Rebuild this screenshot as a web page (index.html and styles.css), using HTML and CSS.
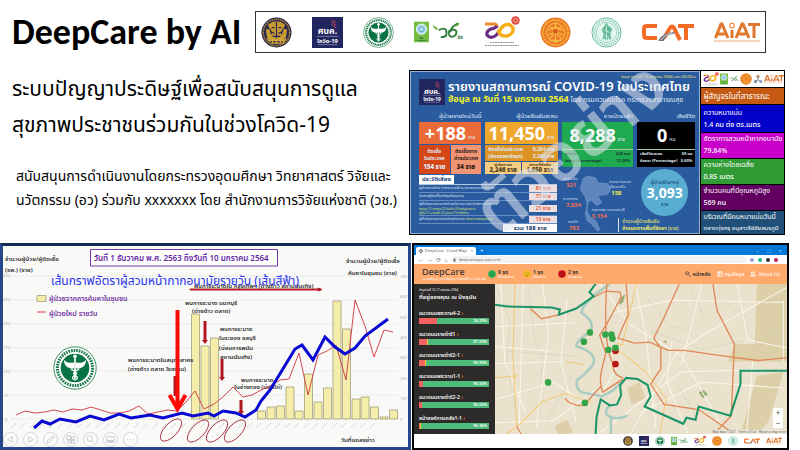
FILE: index.html
```html
<!DOCTYPE html>
<html lang="th">
<head>
<meta charset="utf-8">
<meta name="viewport" content="width=device-width, initial-scale=1">
<title>DeepCare by AI</title>
<link rel="stylesheet" href="styles.css">
</head>
<body>
<svg class="symbols" aria-hidden="true">
  <symbol id="gov" viewBox="0 0 32 32">
    <circle cx="16" cy="16" r="15.5" fill="#2a2750"/>
    <circle cx="16" cy="16" r="13.6" fill="none" stroke="#b8902c" stroke-width="1.4" stroke-dasharray="1.4 .7"/>
    <path d="M7 8q9-7 18 0l-2 4 4 1-1 7-3 4H9l-3-4-1-7 4-1z" fill="#c59a2f"/>
    <path d="M11 11h3m4 0h3M10 15l4 2m8-2l-4 2M16 5v18M12 20h8M9 12l2 6m12-6l-2 6" stroke="#2a2750" stroke-width="1.2" fill="none"/>
    <path d="M6 23l3-2v5m3-4v5m4-5v6m4-6v5m3-6v5l3-4M7 24h18M10 27h12" stroke="#d4aa3c" stroke-width="1.4" fill="none"/>
  </symbol>
  <symbol id="sbk" viewBox="0 0 32 32">
    <path fill="#22265f" d="M0 0h32v32H0z"/>
    <path d="M20 5l5 4M20 7.500l5 4M21 3l4 3" stroke="#d9485c" stroke-width="1"/>
    <text x="16" y="18" font-size="9" font-weight="700" text-anchor="middle" fill="#fff">ศบค.</text>
    <path d="M5 20h22M6 28.500h20" stroke="#8c8fb8" stroke-width=".8"/>
    <text x="16" y="26.500" font-size="6" font-weight="700" text-anchor="middle" fill="#fff">โควิด-19</text>
  </symbol>
  <symbol id="moph" viewBox="0 0 32 32">
    <circle cx="16" cy="16" r="15.4" fill="#fff" stroke="#17794a" stroke-width=".6"/>
    <circle cx="16" cy="16" r="12.800" fill="none" stroke="#17794a" stroke-width="2.200" stroke-dasharray="1.200 .7"/>
    <circle cx="16" cy="16" r="10.400" fill="#087443"/>
    <path d="M16 7v18" stroke="#fff" stroke-width="1.200"/>
    <path d="M15.500 12Q10 13 8 10q0 5 4 6 2 1 3.500 0zM16.500 12q5.500 1 7.500-2 0 5-4 6-2 1-3.500 0z" fill="#fff"/>
    <path d="M13 17q6 2 3 4.500-3 1-1 3M19 17q-6 2-3 4.500 3 1 1 3" stroke="#fff" fill="none" stroke-width=".9"/>
    <circle cx="16" cy="7.500" r="1.300" fill="#fff"/>
  </symbol>
  <symbol id="nrct" viewBox="0 0 16 22">
    <path fill="#74bd43" d="M0 0h16v22H0z"/>
    <circle cx="8" cy="8" r="5.500" fill="#b9dcef" stroke="#e9f6fb"/>
    <circle cx="8" cy="8" r="2.800" fill="none" stroke="#4d9bbb"/>
    <text x="8" y="18" font-size="4" font-weight="700" text-anchor="middle" fill="#1d6a50">วช.</text>
    <path d="M3 20h10" stroke="#337f47"/>
  </symbol>
  <symbol id="wch" viewBox="0 0 32 20">
    <path d="M0 3q4 1 5 5-4-1-5-5z" fill="#65ad36"/>
    <path d="M6 8q8-4 8 3 0 5-6 4" fill="none" stroke="#2d7d35" stroke-width="2"/>
    <path d="M17 8q-2 7 3 7 5-1 4-6-3-3-6 0 1-5 8-8" fill="none" stroke="#2d7d35" stroke-width="2"/>
    <path d="M23 4q3-1 4-3" stroke="#7aba3d" stroke-width="1.500" fill="none"/>
    <text x="28" y="17" font-size="5" font-weight="700" text-anchor="middle" fill="#226d35">๕๙</text>
  </symbol>
  <symbol id="sixty" viewBox="0 0 36 32">
    <path d="M1 8h9q3 0 3 3" fill="none" stroke="#f08a2c" stroke-width="3.200"/>
    <path d="M13 10q-1 2-6 3-5 2-4 6 3 4 8 1 3-2 4-5" fill="none" stroke="#6c2c83" stroke-width="3.200"/>
    <path d="M14 14q2 7 9 6 7-2 6-8-3-5-8-3-4 2-6 7" fill="none" stroke="#f6ae18" stroke-width="3.400"/>
    <circle cx="31.500" cy="4.500" r="4.200" fill="#df4638"/><circle cx="31.500" cy="4.500" r="2" fill="none" stroke="#f4b2a8"/>
    <path d="M6 26.500h24M1 29.500h34" stroke="#9a939d" stroke-width="1" stroke-dasharray="2 .5"/>
  </symbol>
  <symbol id="tu" viewBox="0 0 32 32">
    <circle cx="16" cy="16" r="15.5" fill="#ec7a2a"/>
    <circle cx="16" cy="16" r="13" fill="none" stroke="#f9c23e" stroke-width="1.500" stroke-dasharray="1.500 .8"/>
    <circle cx="16" cy="16" r="9.500" fill="none" stroke="#f9c23e"/>
    <path d="M16 5v22M10 24h12M8 14q8-6 16 0M8 19q8-6 16 0M10 10l12 12M22 10L10 22" stroke="#fac441" fill="none" stroke-width="1.100"/>
    <circle cx="16" cy="15" r="2.500" fill="#d95a22"/>
  </symbol>
  <symbol id="bma" viewBox="0 0 32 32">
    <circle cx="16" cy="16" r="15" fill="#fff" stroke="#59b894" stroke-width="1"/>
    <circle cx="16" cy="16" r="12.600" fill="none" stroke="#8bceb4" stroke-width="2" stroke-dasharray="1.500 .8"/>
    <circle cx="16" cy="16" r="10.500" fill="#e4f5ee" stroke="#5ab894" stroke-width=".6"/>
    <path d="M12 24l1-7-2-4 3-4 2-3 2 3 4 3-2 5 1 7-3-2-2 3-2-3z" fill="#61b998"/>
    <path d="M16 9v16M13 13l6 3m-5 3l5 2" stroke="#d9f2e8" stroke-width=".8"/>
  </symbol>
  <symbol id="cat" viewBox="0 0 52 20">
    <path d="M15 4H5Q2 4 2 7v6q0 3 3 3h10M22 16l6-10q2-3 4 0l6 12M36 4h16M44 4v14" fill="none" stroke="#f36b25" stroke-width="4"/>
    <path d="M16 19q4-9 18-9l-3 2q-8 1-9 7z" fill="#75777b"/>
    <path d="M19 18q3-5 11-7" stroke="#fff" stroke-width=".7" fill="none"/>
  </symbol>
  <symbol id="aiat" viewBox="0 0 46 20">
    <path d="M1.500 16L7 2h1l6 14M4 12h7M22 16l6-14h1l6 14M25 12h7M34 2.500h12M40 3v13" fill="none" stroke="#e1772d" stroke-width="3"/>
    <path d="M18 8v8" stroke="#e1772d" stroke-width="3"/><circle cx="18" cy="3.500" r="2.300" fill="#fff" stroke="#ed8b42" stroke-width="1.200"/>
    <path d="M0 19h46" stroke="#ed9b60" stroke-width="1" stroke-dasharray="2 .4"/>
  </symbol>
  <symbol id="trio" viewBox="0 0 12 12">
    <circle cx="6" cy="3" r="2" fill="#b98a6c"/><circle cx="3" cy="9" r="2" fill="#8793a8"/><circle cx="9.500" cy="9" r="2" fill="#9faabd"/>
    <path d="M6 4v4M3 9l3-2 3 2" stroke="#76839b" fill="none"/>
  </symbol>
  <symbol id="face" viewBox="0 0 10 10">
    <circle cx="5" cy="5" r="4.700" fill="currentColor"/>
    <path d="M2.500 4h1.500M6 4h1.500M3 6.500q2 1.500 4 0" fill="none" stroke="#174e2a" stroke-width=".8" opacity=".6"/>
  </symbol>
</svg>

<main class="slide">
  <header class="top">
    <h1>DeepCare by AI</h1>
    <div class="logos">
      <svg class="round"><use href="#gov"/></svg>
      <svg class="round"><use href="#sbk"/></svg>
      <svg class="round"><use href="#moph"/></svg>
      <span class="pair"><svg class="leaf"><use href="#nrct"/></svg><svg class="year"><use href="#wch"/></svg></span>
      <svg class="mid"><use href="#sixty"/></svg>
      <svg class="round"><use href="#tu"/></svg>
      <svg class="round"><use href="#bma"/></svg>
      <svg class="wide"><use href="#cat"/></svg>
      <svg class="word"><use href="#aiat"/></svg>
    </div>
  </header>

  <section class="intro">
    <div class="copy">
      <h2>ระบบปัญญาประดิษฐ์เพื่อสนับสนุนการดูแล<br>สุขภาพประชาชนร่วมกันในช่วงโควิด-19</h2>
      <p>สนับสนุนการดำเนินงานโดยกระทรวงอุดมศึกษา วิทยาศาสตร์ วิจัยและ<br>นวัตกรรม (อว) ร่วมกับ xxxxxxx โดย สำนักงานการวิจัยแห่งชาติ (วช.)</p>
    </div>

    <div class="covid">
      <div class="report">
        <div class="stamp">ข้อมูล ณ วันที่ 15 มกราคม 2564 เวลา 00.00 น</div>
        <div class="report-head">
          <svg class="badge"><use href="#sbk"/></svg>
          <div>
            <h3>รายงานสถานการณ์ COVID-19 ในประเทศไทย</h3>
            <p><b>ข้อมูล ณ วันที่ 15 มกราคม 2564</b> โดย กรมควบคุมโรค กระทรวงสาธารณสุข</p>
          </div>
        </div>
        <div class="stats">
          <div class="stat">
            <span class="cap">ผู้ป่วยรายใหม่วันนี้</span>
            <div class="big red"><b>+188</b> ราย</div>
            <div class="two">
              <div class="deep">ติดเชื้อ<br>ในประเทศ<strong>154 ราย</strong></div>
              <div class="soft">ติดเชื้อจาก<br>ต่างประเทศ<strong>34 ราย</strong></div>
            </div>
          </div>
          <div class="stat">
            <span class="cap">ผู้ป่วยยืนยันสะสม</span>
            <div class="big amber"><b>11,450</b> ราย</div>
            <div class="lines"><span>ติดเชื้อในประเทศ</span><span>9,204 ราย</span><span>(คัดกรองเชิงรุก)</span><span>3,260 ราย</span></div>
            <div class="two pale">
              <div>ผู้เดินทางฯ<strong>2,246 ราย</strong></div>
              <div>สถานที่กักกัน<strong>1,650 ราย</strong></div>
            </div>
          </div>
          <div class="stat">
            <span class="cap">หายป่วยแล้ว</span>
            <div class="full green"><div class="big"><b>8,288</b> ราย</div><p><span>เพิ่มขึ้น</span><span>628 ราย</span></p><p><span>ร้อยละ (Percentage)</span><span>72.38%</span></p></div>
          </div>
          <div class="stat">
            <span class="cap">เสียชีวิต</span>
            <div class="full black"><div class="big"><b>0</b> คน</div><p><span>เสียชีวิตสะสม</span><span>69 คน</span></p><p><span>ร้อยละ (Percentage)</span><span>0.60%</span></p></div>
          </div>
        </div>
        <div class="lower">
          <div class="history">
            <b class="tag">ประวัติเสี่ยง</b>
            <ul>
              <li><span>ผู้ป่วยรายใหม่ จากระบบเฝ้าระวังและระบบบริการฯ</span><b>81 ราย</b></li>
              <li><span>ค้นหาผู้ติดเชื้อเชิงรุกในชุมชน</span><b>73 ราย</b></li>
              <li class="tall"><span>ผู้ที่เดินทางมาจากต่างประเทศ และเข้าสถานที่กักกัน<em>สหรัฐฯ (1) อังกฤษ (2) อินเดีย (3) สหรัฐอาหรับฯ</em><em>ญี่ปุ่น (1) มาเลเซีย (2) ซูดาน (1) ปากีสถาน</em></span><b>21 ราย</b></li>
              <li><span>ผู้ที่เดินทางมาจากต่างประเทศ <i>ช่องทางธรรมชาติ</i></span><b>13 ราย</b></li>
            </ul>
            <b class="total">รวม 188 ราย</b>
          </div>
          <svg class="regions" viewBox="562 175 72 58">
            <path d="M585 178l5-3 8 2 3 5 10 1 3 6-4 6-9 1 4 7-6 3-5-5-3 1-1 9 3 6 6 4 4 9-3 2-6-7-5-4-2-7 2-9-2-8-5-8z" fill="#6d91c5" opacity=".8"/>
            <g class="zone"><text x="565" y="180">ภาคเหนือ</text><text x="565" y="200">ภาคกลาง</text><text x="570" y="223">ภาคใต้</text><text x="612" y="183">ภาคตะวันออก</text><text x="612" y="188">เฉียงเหนือ</text><text x="594" y="211">กรุงเทพฯ และนนทบุรี</text></g>
            <g class="count"><text x="568" y="187">321</text><text x="568" y="207">7,034</text><text x="571" y="230">783</text><text x="594" y="218">3,154</text><text x="614" y="195" class="yellow">158</text></g>
          </svg>
          <div class="care">
            <div class="bubble">ผู้ป่วยรักษาอยู่<b>3,093</b>ราย</div>
            <p>จำนวนผู้ป่วยยืนยัน<br><b>จำแนกตามพื้นที่รักษา</b> (ราย)</p>
          </div>
        </div>
        <div class="watermark">ตัวอย่าง</div>
      </div>

      <aside class="public">
        <div class="mini"><svg class="s16"><use href="#sixty"/></svg><svg class="s8"><use href="#nrct"/></svg><svg class="s10"><use href="#wch"/></svg><svg class="s12"><use href="#tu"/></svg><svg class="s10"><use href="#trio"/></svg><svg class="s20"><use href="#aiat"/></svg></div>
        <h4>ผู้สัญจรในที่สาธารณะ</h4>
        <div class="blue">ความหนาแน่น<b>1.4 คน ต่อ ตร.เมตร</b></div>
        <div class="pink">อัตราการสวมหน้ากากอนามัย<b>79.84%</b></div>
        <div class="leafy">ความห่างโดยเฉลี่ย<b>0.85 เมตร</b></div>
        <div class="plum">จำนวนคนที่มีอุณหภูมิสูง<b>569 คน</b></div>
        <div class="steel">บริเวณที่มีคนหนาแน่นวันนี้<small>ตลาดทุ่งครุ อนุสาวรีย์ชัยสมรภูมิ</small></div>
      </aside>
    </div>
  </section>

  <section class="boards">
    <div class="chart">
      <svg viewBox="3 246 405 199" role="img" aria-label="กราฟผู้ป่วยรายวัน">
        <path d="M10 276h388M10 300h388M10 324h388M10 348h388M10 371h388M10 395h388M10 419h388" stroke="#e2e2e2" stroke-width=".6"/>
        <g class="axis"><text x="3" y="277">300</text><text x="3" y="301">250</text><text x="3" y="325">200</text><text x="3" y="349">150</text><text x="3" y="373">100</text><text x="4" y="397">50</text><text x="5" y="421">0</text>
        <text x="400" y="278">700</text><text x="400" y="298">600</text><text x="400" y="319">500</text><text x="400" y="339">400</text><text x="400" y="359">300</text><text x="400" y="380">200</text><text x="400" y="400">100</text><text x="400" y="421">0</text></g>
        <path d="M11 428l5-5m4 5l5-5m5 5l5-5m4 5l5-5m5 5l5-5m4 5l5-5m5 5l5-5m4 5l5-5m4 5l5-5m5 5l5-5m4 5l5-5m5 5l5-5m4 5l5-5m5 5l5-5m4 5l5-5m5 5l5-5m4 5l5-5m4 5l5-5m5 5l5-5m4 5l5-5m5 5l5-5m4 5l5-5m5 5l5-5m4 5l5-5m5 5l5-5m4 5l5-5m4 5l5-5m5 5l5-5m4 5l5-5m5 5l5-5m4 5l5-5m5 5l5-5m4 5l5-5m4 5l5-5m5 5l5-5m4 5l5-5m5 5l5-5m4 5l5-5m5 5l5-5" class="dates"/>
        <g class="note">
          <text x="5" y="261">จำนวนผู้ป่วย/ผู้ติดเชื้อ</text><text x="5" y="272">(รพ.) (ราย)</text>
          <text x="346" y="263">จำนวนผู้ป่วย/ผู้ติดเชื้อ</text><text x="348" y="275">ค้นหาในชุมชน (ราย)</text>
          <text x="341" y="442">วันที่แถลงข่าว</text>
        </g>
        <path d="M190 289h128v-1l4 1.500-4 1.500v-1H190z" fill="#b51f28" stroke="#b51f28"/>
        <g class="bars">
          <path d="M191.500 419V314h8v105zM201 419v-73h8v73zM210.500 419v-81h8v81zM257.500 419v-8h8v8zM267 419v-12h8v12zM276.500 419v-13h8v13zM286 419v-32h8v32zM295 419v-8h8v8zM304.500 419v-45h8v45zM314 419v-17h8v17zM323.500 419v-31h8v31zM333 419V301h8v118zM342.500 419v-90h8v90zM352 419v-20h8v20zM361 419v-22h8v22zM370.500 419v-12h8v12zM380 419v-2h8v2zM389.500 419v-9h8v9z"/>
          <path d="M37 295.500h9v6h-9z"/>
        </g>
        <path d="M37 312h9" stroke="#d93b42"/>
        <g class="legend"><text x="49" y="301">ผู้ป่วยจากการค้นหาในชุมชน</text><text x="49" y="316">ผู้ป่วยใหม่ รายวัน</text></g>
        <path class="box" d="M90.500 249.500h187v16.500h-187z"/>
        <text x="94" y="261" class="period">วันที่ 1 ธันวาคม พ.ศ. 2563 ถึงวันที่ 10 มกราคม 2564</text>
        <g class="note">
          <text x="194" y="288">พบการระบาดใน กรุงเทพฯ (ต่างด้าว สถานบันเทิง)</text>
          <text x="185" y="305">พบการระบาด นนทบุรี</text><text x="192" y="313">(ต่างด้าว ตลาด)</text>
          <text x="220" y="331">พบการระบาด</text><text x="219" y="340">ในระยอง ชลบุรี</text><text x="219" y="350">(บ่อนการพนัน</text><text x="220" y="359">สถานบันเทิง)</text>
          <text x="128" y="362">พบการระบาดในสมุทรสาคร</text><text x="128" y="371">(ต่างด้าว ตลาด โรงงาน)</text>
          <text x="241" y="382">พบการระบาด</text><text x="234" y="389">ในอ่างทอง (บ่อนไก่)</text>
        </g>
        <g class="arrows"><path d="M203.500 321h3v19h1.500l-3 4-3-4h1.500zM220.500 359h3v18h1.500l-3 4-3-4h1.500zM239.500 400h3v11h1.500l-3 4-3-4h1.500zM173.500 376h3v20h-3z"/></g>
        <text x="51" y="285" class="headline">เส้นกราฟอัตราผู้สวมหน้ากากอนามัยรายวัน (เส้นสีฟ้า)</text>
        <polyline class="cases" points="16,415 25,411 35,413 45,412 54,410 63,412 72,409 82,410 91,407 101,410 110,413 120,413 129,411 139,406 148,414 158,412 167,410 177,411 186,402 195,391 204,409 214,404 224,396 233,387 243,397 252,395 261,390 270,386 280,380 289,379 299,353 308,395 318,355 327,351 336,345 346,380 355,300 365,326 374,357 384,330 393,332"/>
        <polyline class="masks" points="34,428 42,421 50,424 60,419 76,422 90,416 104,420 119,414 131,418 150,415 163,418 182,413 193,416 208,413 214,416 223,411 236,413 245,417 256,410 261,401 270,390 278,377 295,349 302,345 313,360 325,337 335,347 345,354 355,348 365,336 388,319"/>
        <path d="M177.500 310v96M169.500 395l8 14 8-14" fill="none" stroke="#fe0b08" stroke-width="4"/>
        <g fill="none" stroke="#a92c43" stroke-width=".9"><ellipse cx="171" cy="430" rx="14" ry="6.500" transform="rotate(-47 171 430)"/><ellipse cx="198" cy="431" rx="14" ry="6.500" transform="rotate(-47 198 431)"/><ellipse cx="217" cy="431" rx="14" ry="6.500" transform="rotate(-47 217 431)"/><ellipse cx="235" cy="431" rx="14" ry="6.500" transform="rotate(-47 235 431)"/></g>
        <use href="#moph" x="53" y="346" width="44" height="44"/>
      </svg>
      <div class="controls">
        <button aria-label="ก่อนหน้า"><svg viewBox="0 0 14 14"><path d="M9 4v6L4 7z"/></svg></button>
        <button aria-label="ถัดไป"><svg viewBox="0 0 14 14"><path d="M5 4v6l5-3z"/></svg></button>
        <button aria-label="ปากกา"><svg viewBox="0 0 14 14"><path d="M3 11l1-3 6-5 1 1-5 6z"/></svg></button>
        <button aria-label="สไลด์ทั้งหมด"><svg viewBox="0 0 14 14"><path d="M3 3h4v4H3zM8 4h3v3H8zM4 8h3v3H4zM8 8h3v3H8z"/></svg></button>
        <button aria-label="ซูม"><svg viewBox="0 0 14 14"><circle cx="6" cy="6" r="3"/><path d="M8 8l3 3"/></svg></button>
        <button aria-label="คำบรรยาย"><svg viewBox="0 0 14 14"><path d="M3 4h8v6H3zM4 8h6v1H4z"/></svg></button>
        <button aria-label="เพิ่มเติม"><svg viewBox="0 0 14 14"><path d="M3 7h1M6.500 7h1M10 7h1"/></svg></button>
      </div>
    </div>

    <div class="browser">
      <div class="tabs"><button class="tab"><svg viewBox="0 0 8 8"><circle cx="4" cy="4" r="3" fill="none" stroke="#444" stroke-width="1.500"/><path d="M2 5l4-3" stroke="#444"/></svg>DeepCare - Covid Map<i>×</i></button><button class="plus" aria-label="แท็บใหม่">+</button><span class="win"><i>–</i><i>□</i><i>×</i></span></div>
      <div class="address"><button aria-label="ย้อนกลับ">←</button><button aria-label="ไปข้างหน้า">→</button><button aria-label="โหลดใหม่">⟳</button><button aria-label="หน้าแรก">⌂</button><label class="url"><svg viewBox="0 0 6 8"><path d="M1 3h4v4H1z" fill="#555"/><path d="M2 3V1h2v2" fill="none" stroke="#555"/></svg><input type="text" aria-label="ที่อยู่เว็บ" value="deepcareapp.aiat.or.th"></label><span class="ext"><i></i><i></i><i></i><i></i></span></div>
      <div class="appbar">
        <div class="brand">DeepCare<small>ระบบปัญญาประดิษฐ์ตรวจจับหน้ากากอนามัย</small></div>
        <div class="moods">
          <div><svg class="g"><use href="#face"/></svg><span><b>9 จุด</b>ใส่หน้ากาก</span></div>
          <div><svg class="y"><use href="#face"/></svg><span><b>1 จุด</b>เฝ้าระวัง</span></div>
          <div><svg class="r"><use href="#face"/></svg><span><b>2 จุด</b>ควรระวัง</span></div>
        </div>
        <nav><a href="#" class="on"><svg viewBox="0 0 8 8"><circle cx="3" cy="3" r="2"/><path d="M5 5l3 3"/></svg>หน้าหลัก</a><a href="#"><svg viewBox="0 0 8 8"><path d="M1 1h6v6H1zM1 3h6M3 1v6"/></svg>สรุปข้อมูล</a><a href="#"><svg viewBox="0 0 8 8"><path d="M2 1v2h1V1zM5 1v2h1V1zM1 5v2h3V5zM5 5v2h2V5z"/></svg>About Us</a></nav>
      </div>
      <div class="app">
        <div class="places">
          <small>ข้อมูลวันที่ 10-17 มกราคม 2564</small>
          <h5>ที่อยู่ของคุณ ณ ปัจจุบัน</h5>
          <div class="place">แนวถนนพระราม4-2 <em>›</em><div class="meter"><i style="width:26%"></i><span>74.29%</span></div></div>
          <div class="place">แนวถนนราชดำริ1 <em>›</em><div class="meter"><i style="width:11%"></i><u></u><span>87.23%</span></div></div>
          <div class="place">แนวถนนราชดำริ2-1 <em>›</em><div class="meter"><i style="width:9%"></i><u></u><span>90.30%</span></div></div>
          <div class="place">แนวถนนพระราม1-1 <em>›</em><div class="meter"><i style="width:5%"></i><span>95.00%</span></div></div>
          <div class="place">แนวถนนราชดำริ2-2 <em>›</em><div class="meter"><i style="width:4%"></i><span>96.00%</span></div></div>
          <div class="place">หน้าองค์การเภสัช1-1 <em>›</em><div class="meter"><i style="width:2%"></i><u></u><span>96.36%</span></div></div>
        </div>
        <div class="map">
          <svg viewBox="495 284 291 147" preserveAspectRatio="xMidYMid slice">
            <path fill="#ebe2cd" d="M490 280h300v155H490z"/>
            <path fill="#ddd0a9" d="M754 284h32v76h-60l6-17h20zM754 374l26-4-14 48-12 13h-16zM556 423l12-6 6 12-14 4zM627 386l12-6 6 16-14 6zM620 298l6-4-4 10-4-1z"/>
            <path fill="#9aae79" d="M621 297l4-3-2 8-4 2zM697 390l5-2 4 4-5 4zM662 341l3-2 1 3z"/>
            <g fill="none" stroke="#c5d4bd" stroke-width=".6"><path d="M500 290l12 30-3 40 12 68M530 286l6 50 8 20-3 60M510 350l70 5M575 370l-30 55M640 290l30 36 20 4M650 330l50 18 40-8M675 380l20 35M690 290l14 30M720 300l28 20M760 320l20 20"/></g>
            <g fill="none" stroke="#f9f6ec" stroke-width="1"><path d="M495 326l80-4M495 345l60 5M495 362l70-2M495 398l60-18 30 20M503 284l4 75 20 50M525 284l-4 147M544 284l6 50-12 90M568 300l-6 60 15 60M495 420l60-2 40-30M600 284l30 40 50 30 40 70M635 284l10 50 10 90M786 286l-80 45-30 20-46 80M600 430l80-60 80-2M671 340l-5 40 20 50M700 284l-20 80M735 284l10 55 41 8M610 313l60-13 110 2M620 360l-20 35M750 360l-6 70M780 300v60M640 410l60-30 80 6"/></g>
            <g fill="none" stroke="#f3c873" stroke-width="1"><path d="M517 284l-2 72 4 68 25-25 22-8 27 10M495 376l25-2M567 360l18 3M636 284l-14 60-5-2M620 350l25 20 20 26-6 35M519 424l-11 7"/></g>
            <path d="M610 284q-26 17-28 28 14 9 9 18-14 10-14 15 20 6 17 17-6 9-16 16-2 8 4 12l20 4q14-5 20-16M611 402q-8 6-3 11 8 5 19 0M611 413v18" fill="none" stroke="#a8ccc1" stroke-width="2.500"/>
            <g fill="none" stroke="#e18757" stroke-width="1.300"><path d="M532 308l11 10 18-4M594 297l12-6 14 1 1 5-14 26-7 11 6 18-4 16q-3 12 1 22l20-13M626 284l2 30-10 23 16 5 15-1 18 8h16l34 5 38 5 31-3M678 284l-15 33-10 20 7 10v20l-10 15 13 20 34 5 35 24M711 284l4 26 17 33-3 70-17 18M607 284q-4 60 6 78 0 12 10 14M566 396q6 8 19 7 12-15 17-19M519 424l4 7"/></g>
            <path d="M495 304l15 2 43 1 8 2-1 5 17-6 17-12-4-4 6-8M596 431l1-17 4-17 9 6 7-1 4-9-1-10 6-7 11 1 10 6 3 11-6 10 38 17 3-6 9 2 3-13 31 9 10-31v-13h48" fill="none" stroke="#199568" stroke-width="2"/>
            <g class="pins"><use href="#face" x="587" y="328" width="7" height="7"/><use href="#face" x="581" y="337" width="7" height="7"/><use href="#face" x="602" y="330" width="7" height="7"/><use href="#face" x="608" y="330" width="7" height="7"/><use href="#face" x="609" y="334" width="7" height="7"/><use href="#face" x="605" y="345" width="7" height="7"/><use href="#face" x="546" y="377" width="7" height="7"/><use href="#face" x="582" y="397" width="7" height="7"/><g class="alert"><use href="#face" x="612" y="346" width="7" height="7"/><use href="#face" x="612" y="359" width="7" height="7"/></g><use href="#face" x="612" y="343" width="7" height="7"/></g>
          </svg>
          <div class="zoom"><button aria-label="ขยาย">+</button><button aria-label="ย่อ">−</button></div>
          <small class="credit">Map data ©2021 &nbsp; Terms of Use &nbsp; Report a map error</small>
        </div>
      </div>
      <footer><svg class="s10"><use href="#gov"/></svg><svg class="s10"><use href="#sbk"/></svg><svg class="s10"><use href="#moph"/></svg><span class="pair"><svg class="s6"><use href="#nrct"/></svg><svg class="s10"><use href="#wch"/></svg></span><svg class="s12"><use href="#sixty"/></svg><svg class="s10"><use href="#tu"/></svg><svg class="s10"><use href="#bma"/></svg><svg class="s16"><use href="#cat"/></svg><svg class="s16"><use href="#aiat"/></svg></footer>
    </div>
  </section>
</main>
</body>
</html>
```
FILE: styles.css
```css
* { box-sizing: border-box; }
body { margin: 0; background: #fff; color: #000; font-family: "Noto Sans", "Noto Sans Thai", sans-serif; }
h1, h2, h3, h4, h5, p, ul { margin: 0; padding: 0; font-weight: inherit; }
ul { list-style: none; }
i, em { font-style: normal; }
button { border: 0; padding: 0; background: none; font: inherit; color: inherit; }
a { color: inherit; text-decoration: none; }
.symbols { position: absolute; width: 0; height: 0; }

.slide { display: flex; flex-direction: column; gap: 8px; overflow: hidden; }

.top { display: flex; align-items: flex-start; gap: 14px; padding: 11px 34px 9px 12px; }
h1 { flex: none; font: 700 36px/42px Carlito, Lato, sans-serif; white-space: nowrap; }
.logos { flex: 1; display: flex; align-items: center; justify-content: space-between; height: 42px; padding: 0 5px; border: 1px solid #333; }
.round { width: 31px; height: 31px; }
.pair { display: flex; align-items: center; gap: 4px; }
.leaf { width: 15px; height: 22px; }
.year { width: 31px; height: 20px; }
.mid { width: 36px; height: 32px; }
.wide { width: 52px; height: 20px; }
.word { width: 46px; height: 20px; }

.intro { display: grid; grid-template-columns: 409fr 381fr; padding-right: 10px; }
.copy { padding-left: 12px; white-space: nowrap; min-width: 0; }
h2 { font-size: 21px; line-height: 36px; }
.copy p { padding: 22px 0 0 4px; font-size: 14px; line-height: 24px; }

.covid { display: grid; grid-template-columns: 292fr 83fr; gap: 1px; height: 165px; padding: 1px; background: #000; margin-right: 5px; min-width: 0; overflow: hidden; }
.report { position: relative; display: flex; flex-direction: column; padding: 3px 4px 2px 8px; overflow: hidden; background: #2b5b9f; border: 1px solid #8fb3d9; color: #dfe9f7; font-size: 5px; line-height: 7px; white-space: nowrap; min-width: 0; }
.stamp { align-self: flex-end; height: 4px; line-height: 4px; color: #f5e663; font-size: 4px; }
.report-head { display: flex; gap: 3px; }
.badge { width: 26px; height: 26px; flex: none; }
h3 { font-size: 13px; line-height: 14px; font-weight: 600; color: #fff; }
.report-head p { font-size: 7px; line-height: 12px; }
.report-head p b { font-size: 9px; color: #f1f02c; }
.stats { display: grid; grid-template-columns: 62fr 72fr 71fr 58fr; gap: 4px; padding-top: 6px; }
.stat { display: flex; flex-direction: column; min-width: 0; }
.cap { height: 10px; text-align: right; font-size: 6px; line-height: 8px; }
.big { display: flex; align-items: flex-end; justify-content: center; gap: 2px; height: 22px; line-height: 10px; padding-bottom: 2px; }
.big b { font-size: 18px; line-height: 18px; color: #fff; }
.red { background: #ea6a38; }
.amber { background: #efa62d; }
.two { display: grid; grid-template-columns: 1fr 1fr; gap: 1px; margin-top: 1px; text-align: center; font-weight: 700; }
.two > div { height: 29px; padding-top: 3px; min-width: 0; overflow: hidden; }
.two strong { display: block; font-size: 6px; line-height: 10px; }
.deep { background: #d54716; }
.soft { background: #f09474; color: #331d1b; }
.lines { display: grid; grid-template-columns: auto auto; justify-content: space-between; background: #dd9424; height: 16px; padding: 1px 3px; font-weight: 700; margin-top: 1px; }
.pale > div { height: 12px; padding: 0; background: #f7cd81; color: #50421f; font-size: 4px; line-height: 5px; }
.pale strong { line-height: 6px; }
.full { height: 45px; padding-top: 2px; }
.full p { display: flex; justify-content: space-between; padding: 0 3px; font-size: 4px; font-weight: 700; }
.full p:nth-child(2) { border-top: 1px solid #a5c9a3; margin-top: 3px; }
.green { background: #20aa50; }
.green p { color: #123c34; }
.black { background: #000; }
.lower { display: grid; grid-template-columns: 140fr 72fr 62fr; gap: 3px; padding-top: 1px; }
.history { display: flex; flex-direction: column; min-width: 0; }
.tag { align-self: flex-start; padding: 0 3px; line-height: 9px; font-size: 6px; background: #fff; color: #203f7d; }
.history ul { border-top: 1px solid #b5c8e2; }
.history li { display: flex; justify-content: space-between; height: 8px; border-bottom: 1px solid #668dc0; }
.history li.tall { height: 15px; align-items: center; }
.history li > span { font-size: 4px; line-height: 6px; overflow: hidden; }
.history em { display: block; line-height: 4px; font-size: 3px; color: #d6e470; }
.history li i { color: #d6e470; }
.history li b { flex: none; width: 28px; background: #eddee0; color: #e3603a; text-align: center; }
.total { align-self: flex-end; width: 54px; background: #fff; color: #183766; text-align: center; font-size: 6px; line-height: 8px; }
.regions { width: 100%; height: 58px; overflow: visible; }
.zone { font-size: 4px; fill: #cddcf0; }
.count { font-size: 6px; font-weight: 700; fill: #f56f4e; }
.yellow { fill: #f5e746; }
.care { display: flex; flex-direction: column; align-items: center; min-width: 0; }
.bubble { display: flex; flex-direction: column; align-items: center; justify-content: center; width: 47px; height: 47px; border-radius: 50%; background: #59add0; color: #163f70; font-size: 5px; line-height: 8px; margin-top: -6px; }
.bubble b { color: #fff; font-size: 14px; line-height: 14px; }
.care p { align-self: flex-start; padding-left: 3px; border-left: 1px solid #dce5f2; margin: 2px 0 0 -16px; color: #f2ed62; line-height: 7px; }
.watermark { position: absolute; left: 28px; top: 34px; width: 260px; text-align: center; font-size: 68px; line-height: 80px; font-weight: 600; color: #dfe5ee; opacity: .55; transform: rotate(-40deg); }

.public { display: grid; grid-template-rows: 16fr 16fr 28fr 25fr 25fr 26fr 23fr; gap: 1px; color: #fff; font-size: 7px; line-height: 12px; white-space: nowrap; min-width: 0; }
.public > * { padding-left: 2px; overflow: hidden; min-height: 0; }
.mini { display: flex; align-items: center; gap: 1px; background: #fff; }
.s6 { width: 6px; height: 10px; }
.s8 { width: 8px; height: 12px; }
.s10 { width: 10px; height: 10px; }
.s12 { width: 12px; height: 12px; }
.s16 { width: 16px; height: 14px; }
.s20 { width: 20px; height: 14px; }
.public h4 { background: #c65a13; font-size: 8px; line-height: 15px; }
.public b { display: block; font-weight: 500; }
.public small { display: block; font-size: 6px; line-height: 10px; }
.blue { background: #0000c9; padding-top: 2px; }
.pink { background: #c800c9; }
.leafy { background: #319c35; }
.plum { background: #610061; }
.steel { background: #205078; }

.boards { display: grid; grid-template-columns: 411fr 377fr; gap: 1px; padding-right: 11px; align-items: stretch; }
.chart { position: relative; border: 3px solid #27478a; border-top-color: #142d57; background: #f9f9f8; min-width: 0; }
.chart > svg { display: block; width: 100%; }
.axis { font-size: 4px; fill: #aaa; }
.dates { fill: none; stroke: #cbcbcb; stroke-width: 1; stroke-dasharray: 1 .5; }
.note { font-size: 6px; font-weight: 600; fill: #282828; }
.bars { fill: #f4eeaa; stroke: #99936e; stroke-width: .7; }
.legend { font-size: 7px; font-weight: 600; fill: #7030a0; }
.box { fill: #fff; stroke: #7438aa; }
.period { font-size: 8px; font-weight: 600; fill: #6427a2; }
.headline { font-size: 12px; font-weight: 400; fill: #2b36ee; }
.cases { fill: none; stroke: #d0313e; stroke-width: .9; }
.masks { fill: none; stroke: #0808d2; stroke-width: 3; }
.arrows { fill: #b1171f; }
.controls { position: absolute; left: 0; bottom: 0; display: flex; gap: 5px; }
.controls button { width: 15px; height: 15px; border: 1px solid #d4d4d4; border-radius: 50%; background: rgba(255,255,255,.45); }
.controls svg { display: block; width: 13px; height: 13px; fill: none; stroke: #c8c8c8; }

.browser { display: flex; flex-direction: column; border: 2px solid #050505; background: #fff; min-width: 0; white-space: nowrap; overflow: hidden; }
.tabs { display: flex; align-items: flex-end; gap: 4px; height: 10px; background: #0078d8; color: #fff; font-size: 6px; line-height: 8px; padding-left: 2px; }
.tab { display: flex; align-items: center; width: 60px; height: 8px; padding: 0 3px; gap: 2px; border-radius: 2px 2px 0 0; background: #fff; color: #555; font-size: 4px; }
.tab svg { width: 4px; height: 4px; }
.tab i { margin-left: auto; }
.win { display: flex; gap: 8px; margin-left: auto; padding-right: 5px; color: #9bd0ff; }
.address { display: flex; align-items: center; gap: 3px; height: 9px; padding: 0 4px; color: #666; font-size: 6px; line-height: 8px; }
.url { flex: 1; display: flex; align-items: center; gap: 3px; min-width: 0; height: 7px; padding: 0 2px; border-radius: 4px; background: #f1f3f4; }
.url svg { width: 3px; height: 4px; }
.url input { flex: 1; min-width: 0; height: 7px; padding: 0; border: 0; background: none; color: #666; font: 4px/7px "Noto Sans", sans-serif; }
.ext { display: flex; gap: 4px; padding-right: 5px; }
.ext i { width: 4px; height: 4px; border-radius: 2px; background: #a2a0d1; }
.ext i:nth-child(2) { background: #1cbb8b; }
.ext i:nth-child(3) { background: #333; }
.ext i:nth-child(4) { background: #c02061; }
.appbar { display: flex; align-items: center; height: 20px; padding: 0 7px 0 8px; background: #ffa96c; }
.brand { width: 66px; color: #443e42; font: 600 9px/10px "Open Sans", sans-serif; }
.brand small { display: block; color: #fff; font-size: 3px; line-height: 4px; font-weight: 400; }
.moods { display: flex; }
.moods > div { display: flex; align-items: center; gap: 2px; width: 35px; color: #fff; font-size: 4px; line-height: 4px; }
.moods svg { width: 8px; height: 8px; }
.moods b { display: block; color: #3b3737; font-size: 5px; line-height: 6px; }
.g { color: #24ad53; }
.y { color: #f4b920; }
.r { color: #c90d12; }
nav { display: flex; gap: 6px; margin-left: auto; color: #fff; font-size: 5px; line-height: 8px; }
nav a { display: flex; align-items: center; gap: 2px; }
nav svg { width: 6px; height: 6px; fill: none; stroke: currentColor; }
.on { color: #3d3838; font-weight: 700; }
.app { flex: 1; display: grid; grid-template-columns: 81fr 292fr; }
.places { background: #2d2b2a; color: #fff; padding: 4px 6px 0 5px; font-size: 5px; overflow: hidden; min-width: 0; }
.places > small { display: block; font-size: 3px; line-height: 5px; }
h5 { font-size: 6px; line-height: 8px; font-weight: 600; padding-bottom: 8px; }
.place { height: 20px; line-height: 9px; font-weight: 600; }
.place + .place { padding-top: 1px; height: 21px; }
.place em { color: #f08a3c; }
.meter { display: flex; align-items: center; height: 6px; background: #4dbb79; }
.meter i { height: 6px; background: #f56060; }
.meter u { width: 1px; height: 6px; background: #f5c631; }
.meter span { margin-left: auto; padding-right: 2px; font-size: 4px; line-height: 6px; }
.map { position: relative; min-width: 0; overflow: hidden; background: #ebe2cd; }
.map > svg { display: block; width: 100%; height: 100%; }
.pins { color: #37ab4b; }
.alert { color: #c71214; }
.zoom { position: absolute; right: 4px; bottom: 6px; display: flex; flex-direction: column; background: #fff; }
.zoom button { width: 10px; height: 10px; font-size: 8px; line-height: 10px; color: #555; }
.credit { position: absolute; right: 1px; bottom: 0; font-size: 3px; line-height: 4px; color: #555; background: #eee9dc; }
footer { display: flex; justify-content: flex-end; align-items: center; gap: 6px; height: 14px; padding-right: 5px; }
footer .pair { gap: 1px; }
```
